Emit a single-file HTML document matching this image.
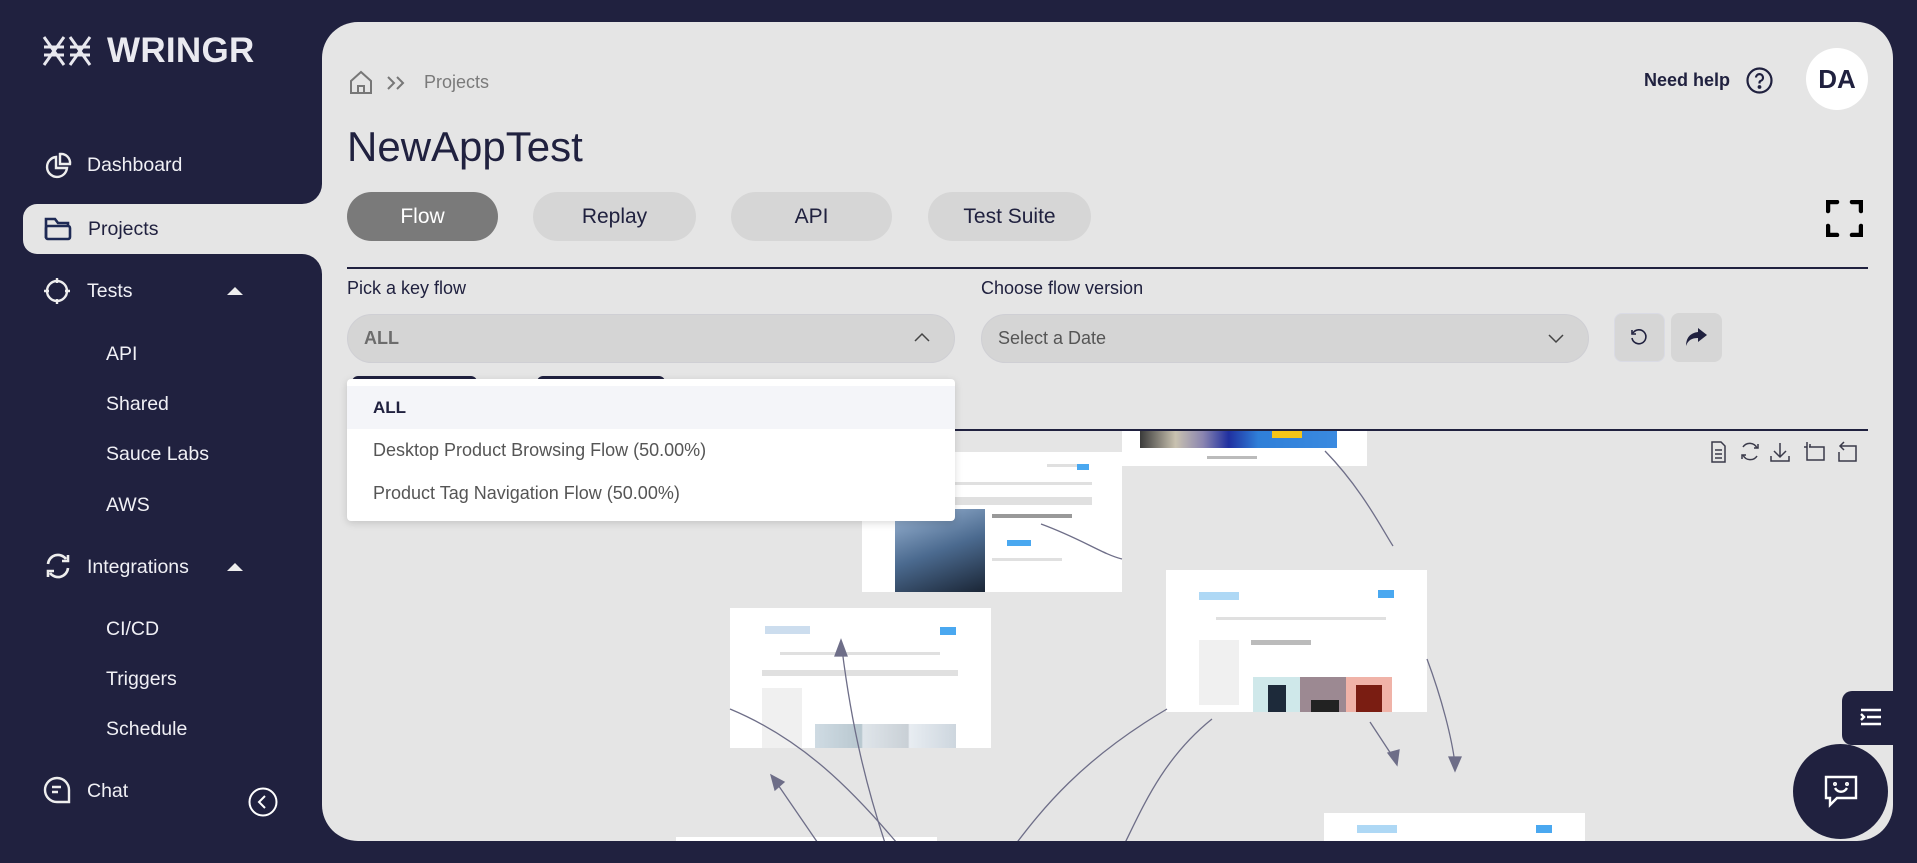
<!DOCTYPE html>
<html><head><meta charset="utf-8"><style>
*{box-sizing:border-box;margin:0;padding:0}
body{width:1917px;height:863px;background:#20213f;font-family:"Liberation Sans",sans-serif;position:relative;overflow:hidden}
.a{position:absolute}
.nav{position:absolute;color:#f0f0f5;font-size:19.5px;white-space:nowrap}
.ic{position:absolute}
.main{position:absolute;left:322px;top:22px;width:1571px;height:819px;background:#e5e5e5;border-radius:36px;overflow:hidden}
.tab{position:absolute;top:170px;height:49px;border-radius:25px;background:#d6d6d6;color:#20213f;font-size:21px;display:flex;align-items:center;justify-content:center}
.sel{position:absolute;top:292px;height:49px;border-radius:25px;background:#d5d5d5;border:1px solid #cfcfd4;color:#6c6c6c;font-size:18px;padding-left:16px;display:flex;align-items:center}
.th{position:absolute;background:#fff;overflow:hidden}
.ln{position:absolute;height:3px;background:#e0e0e0}
</style></head><body>
<svg class="a" style="left:42px;top:33px" width="52" height="36" viewBox="0 0 52 36" fill="none" stroke="#e8e8ee" stroke-width="3">
<path d="M2 4 L22 32 M22 4 L2 32 M2 14 H22 M2 22 H22"/><path d="M28 4 L48 32 M48 4 L28 32 M28 14 H48 M28 22 H48"/></svg>
<div class="a" style="left:107px;top:31px;color:#eaeaf0;font-size:35px;font-weight:bold;letter-spacing:0.3px">WRINGR</div>

<div class="a" style="left:23px;top:204px;width:310px;height:50px;background:#e5e5e5;border-radius:14px 0 0 14px"></div>
<div class="a" style="left:286px;top:170px;width:36px;height:34px;background:#e5e5e5"></div>
<div class="a" style="left:286px;top:160px;width:36px;height:44px;background:#20213f;border-bottom-right-radius:20px"></div>
<div class="a" style="left:286px;top:254px;width:36px;height:34px;background:#e5e5e5"></div>
<div class="a" style="left:286px;top:254px;width:36px;height:44px;background:#20213f;border-top-right-radius:20px"></div>

<svg class="ic" style="left:44px;top:152px" width="28" height="28" viewBox="0 0 28 28" fill="none" stroke="#eee" stroke-width="2.4"><path d="M12 5 A10 10 0 1 0 23 16 H12 Z"/><path d="M16 2 A9 9 0 0 1 26 12 H16 Z"/></svg>
<div class="nav" style="left:87px;top:154px">Dashboard</div>
<svg class="ic" style="left:44px;top:216px" width="28" height="26" viewBox="0 0 28 26" fill="none" stroke="#1e2a55" stroke-width="2.6"><path d="M2 22 V3 H11 L14 7 H24 V10"/><rect x="2" y="10" width="24" height="13" rx="2"/></svg>
<div class="nav" style="left:88px;top:218px;color:#20213f">Projects</div>
<svg class="ic" style="left:43px;top:277px" width="28" height="28" viewBox="0 0 28 28" fill="none" stroke="#eee" stroke-width="2.4"><circle cx="14" cy="14" r="10"/><path d="M14 1 V6 M14 22 V27 M1 14 H6 M22 14 H27"/></svg>
<div class="nav" style="left:87px;top:280px">Tests</div>
<div class="a" style="left:227px;top:287px;width:0;height:0;border-left:8px solid transparent;border-right:8px solid transparent;border-bottom:8px solid #eee"></div>
<div class="nav" style="left:106px;top:343px">API</div>
<div class="nav" style="left:106px;top:393px">Shared</div>
<div class="nav" style="left:106px;top:443px">Sauce Labs</div>
<div class="nav" style="left:106px;top:494px">AWS</div>
<svg class="ic" style="left:44px;top:552px" width="28" height="28" viewBox="0 0 28 28" fill="none" stroke="#eee" stroke-width="2.6"><path d="M4 12 A10 10 0 0 1 22 7 M24 3 V9 H18"/><path d="M24 16 A10 10 0 0 1 6 21 M4 25 V19 H10"/></svg>
<div class="nav" style="left:87px;top:556px">Integrations</div>
<div class="a" style="left:227px;top:563px;width:0;height:0;border-left:8px solid transparent;border-right:8px solid transparent;border-bottom:8px solid #eee"></div>
<div class="nav" style="left:106px;top:618px">CI/CD</div>
<div class="nav" style="left:106px;top:668px">Triggers</div>
<div class="nav" style="left:106px;top:718px">Schedule</div>
<svg class="ic" style="left:43px;top:776px" width="28" height="28" viewBox="0 0 28 28" fill="none" stroke="#eee" stroke-width="2.4"><path d="M26 26 H14 A12 12 0 1 1 26 14 Z"/><path d="M9 11 H18 M9 16 H15"/></svg>
<div class="nav" style="left:87px;top:780px">Chat</div>
<svg class="ic" style="left:248px;top:787px" width="30" height="30" viewBox="0 0 30 30" fill="none" stroke="#fff" stroke-width="2"><circle cx="15" cy="15" r="13.5"/><path d="M17 9 L11 15 L17 21"/></svg>

<div class="main">
 <svg class="a" style="left:27px;top:48px" width="24" height="25" viewBox="0 0 24 25" fill="none" stroke="#777" stroke-width="2"><path d="M2 11 L12 2 L22 11 V23 H2 Z"/><path d="M9 23 V16 H15 V23"/></svg>
 <svg class="a" style="left:64px;top:53px" width="20" height="16" viewBox="0 0 20 16" fill="none" stroke="#777" stroke-width="2"><path d="M2 2 L8 8 L2 14 M11 2 L17 8 L11 14"/></svg>
 <div class="a" style="left:102px;top:50px;font-size:18px;color:#7a7a7a">Projects</div>
 <div class="a" style="left:25px;top:101px;font-size:42px;color:#20213f;font-weight:500">NewAppTest</div>
 <div class="a" style="left:1322px;top:48px;font-size:18px;color:#20213f;font-weight:bold">Need help</div>
 <svg class="a" style="left:1424px;top:45px" width="27" height="27" viewBox="0 0 27 27" fill="none" stroke="#20213f" stroke-width="2.2"><circle cx="13.5" cy="13.5" r="12"/><path d="M10 10.5 A3.5 3.5 0 1 1 14.5 14 C13.5 14.5 13.5 15 13.5 16.5"/><circle cx="13.5" cy="20" r="0.8" fill="#20213f"/></svg>
 <div class="a" style="left:1484px;top:26px;width:62px;height:62px;border-radius:50%;background:#fff;color:#20213f;font-size:26px;font-weight:bold;display:flex;align-items:center;justify-content:center">DA</div>

 <div class="tab" style="left:25px;width:151px;background:#7a7a7a;color:#fff">Flow</div>
 <div class="tab" style="left:211px;width:163px">Replay</div>
 <div class="tab" style="left:409px;width:161px">API</div>
 <div class="tab" style="left:606px;width:163px">Test Suite</div>
 <svg class="a" style="left:1504px;top:178px" width="37" height="37" viewBox="0 0 37 37" fill="none" stroke="#000" stroke-width="4.5" stroke-linecap="round"><path d="M2 11 V2 H11 M26 2 H35 V11 M35 26 V35 H26 M11 35 H2 V26"/></svg>
 <div class="a" style="left:25px;top:245px;width:1521px;height:2px;background:#20213f"></div>
 <div class="a" style="left:25px;top:256px;font-size:18px;color:#20213f;font-weight:500">Pick a key flow</div>
 <div class="a" style="left:659px;top:256px;font-size:18px;color:#20213f;font-weight:500">Choose flow version</div>
 <div class="sel" style="left:25px;width:608px;font-weight:bold">ALL</div>
 <svg class="a" style="left:592px;top:310px" width="16" height="10" viewBox="0 0 16 10" fill="none" stroke="#444" stroke-width="1.5"><path d="M1 9 L8 2 L15 9"/></svg>
 <div class="sel" style="left:659px;width:608px;color:#555">Select a Date</div>
 <svg class="a" style="left:1226px;top:312px" width="16" height="10" viewBox="0 0 16 10" fill="none" stroke="#444" stroke-width="1.5"><path d="M1 1 L8 8 L15 1"/></svg>
 <div class="a" style="left:1292px;top:291px;width:51px;height:49px;border-radius:8px;background:#d6d6d6;border:1px solid #dadbe4"></div>
 <svg class="a" style="left:1307px;top:305px" width="20" height="20" viewBox="0 0 20 20" fill="none" stroke="#20213f" stroke-width="1.6"><path d="M4 6 A7 7 0 1 1 3 11"/><path d="M3 3 V7 H7"/></svg>
 <div class="a" style="left:1349px;top:291px;width:51px;height:49px;border-radius:8px;background:#d6d6d6"></div>
 <svg class="a" style="left:1362px;top:305px" width="24" height="20" viewBox="0 0 24 20" fill="#20213f"><path d="M14 1 L23 8 L14 15 V11 C8 11 4 13 2 19 C2 11 6 6 14 5 Z"/></svg>

 <div class="a" style="left:25px;top:407px;width:1521px;height:2px;background:#20213f"></div>
 <svg class="a" style="left:1387px;top:418px" width="170" height="24" viewBox="0 0 170 24" fill="none" stroke="#3a3a4a" stroke-width="1.5">
  <path d="M3 2 H12 L16 6 V22 H3 Z M6 10 H13 M6 14 H13 M6 18 H13"/>
  <path d="M34 7 A8 8 0 0 1 48 8 M49 4 V8 H45 M48 16 A8 8 0 0 1 34 15 M33 19 V15 H37"/>
  <path d="M71 3 V16 M65 11 L71 17 L77 11 M62 16 V21 H80 V16"/>
  <path d="M98 2 V20 H115 V7 H100 M95 7 H98 M101 7 V4"/>
  <path d="M130 12 V21 H147 V6 H132 M135 2 L131 6 L135 10"/>
 </svg>

 <div class="a" style="left:0;top:409px;width:1571px;height:410px;overflow:hidden">
 <div class="a" style="left:0;top:-22px;width:1571px;height:440px">
  <div class="th" style="left:800px;top:-5px;width:245px;height:62px"><div class="a" style="left:18px;top:0;width:197px;height:44px;background:linear-gradient(90deg,#3a3a3a 0,#c9c2b0 18%,#8a85b0 32%,#2030a0 45%,#2f7fd8 60%,#3a8ae0 100%)"></div><div class="a" style="left:150px;top:24px;width:30px;height:10px;background:#f5c518"></div><div class="a" style="left:85px;top:52px;width:50px;height:3px;background:#bbb"></div></div>
  <div class="th" style="left:540px;top:43px;width:260px;height:140px"><div class="ln" style="left:185px;top:12px;width:40px"></div><div class="a" style="left:215px;top:12px;width:12px;height:6px;background:#4aa8f0"></div><div class="ln" style="left:80px;top:30px;width:150px"></div><div class="ln" style="left:60px;top:45px;width:170px;height:8px"></div><div class="a" style="left:33px;top:57px;width:90px;height:83px;background:linear-gradient(160deg,#9db7d6,#4b6a8f 50%,#1a2535)"></div><div class="ln" style="left:130px;top:62px;width:80px;height:4px;background:#999"></div><div class="a" style="left:145px;top:88px;width:24px;height:6px;background:#4aa8f0"></div><div class="ln" style="left:130px;top:106px;width:70px"></div></div>
  <div class="th" style="left:408px;top:199px;width:261px;height:140px"><div class="a" style="left:35px;top:18px;width:45px;height:8px;background:#cde"></div><div class="a" style="left:210px;top:19px;width:16px;height:8px;background:#4aa8f0"></div><div class="ln" style="left:50px;top:44px;width:160px"></div><div class="ln" style="left:32px;top:62px;width:196px;height:6px"></div><div class="ln" style="left:32px;top:80px;width:40px;height:60px;background:#f0f0f0"></div><div class="a" style="left:85px;top:116px;width:141px;height:67px;background:linear-gradient(90deg,#cfdbe3 0,#b8c7cf 33%,#dfe5ea 34%,#c9d0d6 66%,#e8edf2 67%,#cdd6de 100%)"></div></div>
  <div class="th" style="left:844px;top:161px;width:261px;height:142px"><div class="a" style="left:33px;top:22px;width:40px;height:8px;background:#aed8f5"></div><div class="a" style="left:212px;top:20px;width:16px;height:8px;background:#4aa8f0"></div><div class="ln" style="left:50px;top:47px;width:170px"></div><div class="ln" style="left:85px;top:70px;width:60px;height:5px;background:#bbb"></div><div class="ln" style="left:33px;top:70px;width:40px;height:65px;background:#f0f0f0"></div><div class="a" style="left:87px;top:107px;width:47px;height:67px;background:#cfe8ea"></div><div class="a" style="left:102px;top:115px;width:18px;height:45px;background:#1d2a3a"></div><div class="a" style="left:134px;top:107px;width:46px;height:67px;background:#9c8992"></div><div class="a" style="left:145px;top:130px;width:28px;height:20px;background:#222"></div><div class="a" style="left:180px;top:107px;width:46px;height:67px;background:#f0b3a8"></div><div class="a" style="left:190px;top:115px;width:26px;height:45px;background:#7a1d12"></div></div>
  <div class="th" style="left:1002px;top:404px;width:261px;height:40px"><div class="a" style="left:33px;top:12px;width:40px;height:8px;background:#aed8f5"></div><div class="a" style="left:212px;top:12px;width:16px;height:8px;background:#4aa8f0"></div></div>
  <div class="th" style="left:354px;top:428px;width:261px;height:20px"></div>
  <svg class="a" style="left:0;top:0" width="1571" height="440" fill="none" stroke="#6e6e88" stroke-width="1.3">
   <path d="M1003 42 C1040 80 1060 120 1071 137"/>
   <path d="M719 115 C760 130 780 145 800 150"/>
   <path d="M1105 250 C1120 290 1130 330 1133 355"/>
   <path d="M1048 313 L1071 348"/>
   <path d="M520 240 C530 320 545 380 565 440"/>
   <path d="M500 440 L452 370"/>
   <path d="M408 300 C480 330 530 380 580 440"/>
   <path d="M845 300 C760 350 720 400 690 440"/>
   <path d="M890 310 C840 350 820 400 800 440"/>
   <path d="M519 231 L513 247 L525 247 Z" fill="#6e6e88"/>
   <path d="M449 366 L453 381 L462 373 Z" fill="#6e6e88"/>
   <path d="M1133 362 L1127 348 L1139 348 Z" fill="#6e6e88"/>
   <path d="M1075 356 L1066 344 L1077 341 Z" fill="#6e6e88"/>
  </svg>
 </div>
 </div>
 <div class="a" style="left:30px;top:354px;width:125px;height:10px;background:#20213f;border-radius:6px 6px 0 0"></div>
 <div class="a" style="left:215px;top:354px;width:128px;height:10px;background:#20213f;border-radius:6px 6px 0 0"></div>
 <div class="a" style="left:25px;top:357px;width:608px;height:142px;background:#fff;border-radius:4px;box-shadow:0 2px 8px rgba(0,0,0,0.15)">
  <div class="a" style="left:0;top:7px;width:608px;height:43px;background:#f4f5f9"></div>
  <div class="a" style="left:26px;top:19px;font-size:17px;font-weight:bold;color:#20213f">ALL</div>
  <div class="a" style="left:26px;top:61px;font-size:18px;color:#555">Desktop Product Browsing Flow (50.00%)</div>
  <div class="a" style="left:26px;top:104px;font-size:18px;color:#555">Product Tag Navigation Flow (50.00%)</div>
 </div>
</div>
<div class="a" style="left:1842px;top:691px;width:55px;height:54px;background:#20213f;border-radius:10px 0 0 10px"></div>
<svg class="a" style="left:1860px;top:708px" width="22" height="18" viewBox="0 0 22 18" stroke="#fff" stroke-width="2.4"><path d="M1 2 H21 M7 9 H21 M1 16 H21"/><path d="M1 6 L4 9 L1 12" fill="none"/></svg>
<div class="a" style="left:1793px;top:744px;width:95px;height:95px;border-radius:50%;background:#20213f"></div>
<svg class="a" style="left:1823px;top:774px" width="36" height="34" viewBox="0 0 36 34" fill="none" stroke="#fff" stroke-width="2.4"><path d="M3 3 H33 V24 H14 L7 31 V24 H3 Z"/><path d="M12 14 C15 19 21 19 24 14"/><circle cx="12" cy="10" r="0.8"/><circle cx="24" cy="10" r="0.8"/></svg>
</body></html>
